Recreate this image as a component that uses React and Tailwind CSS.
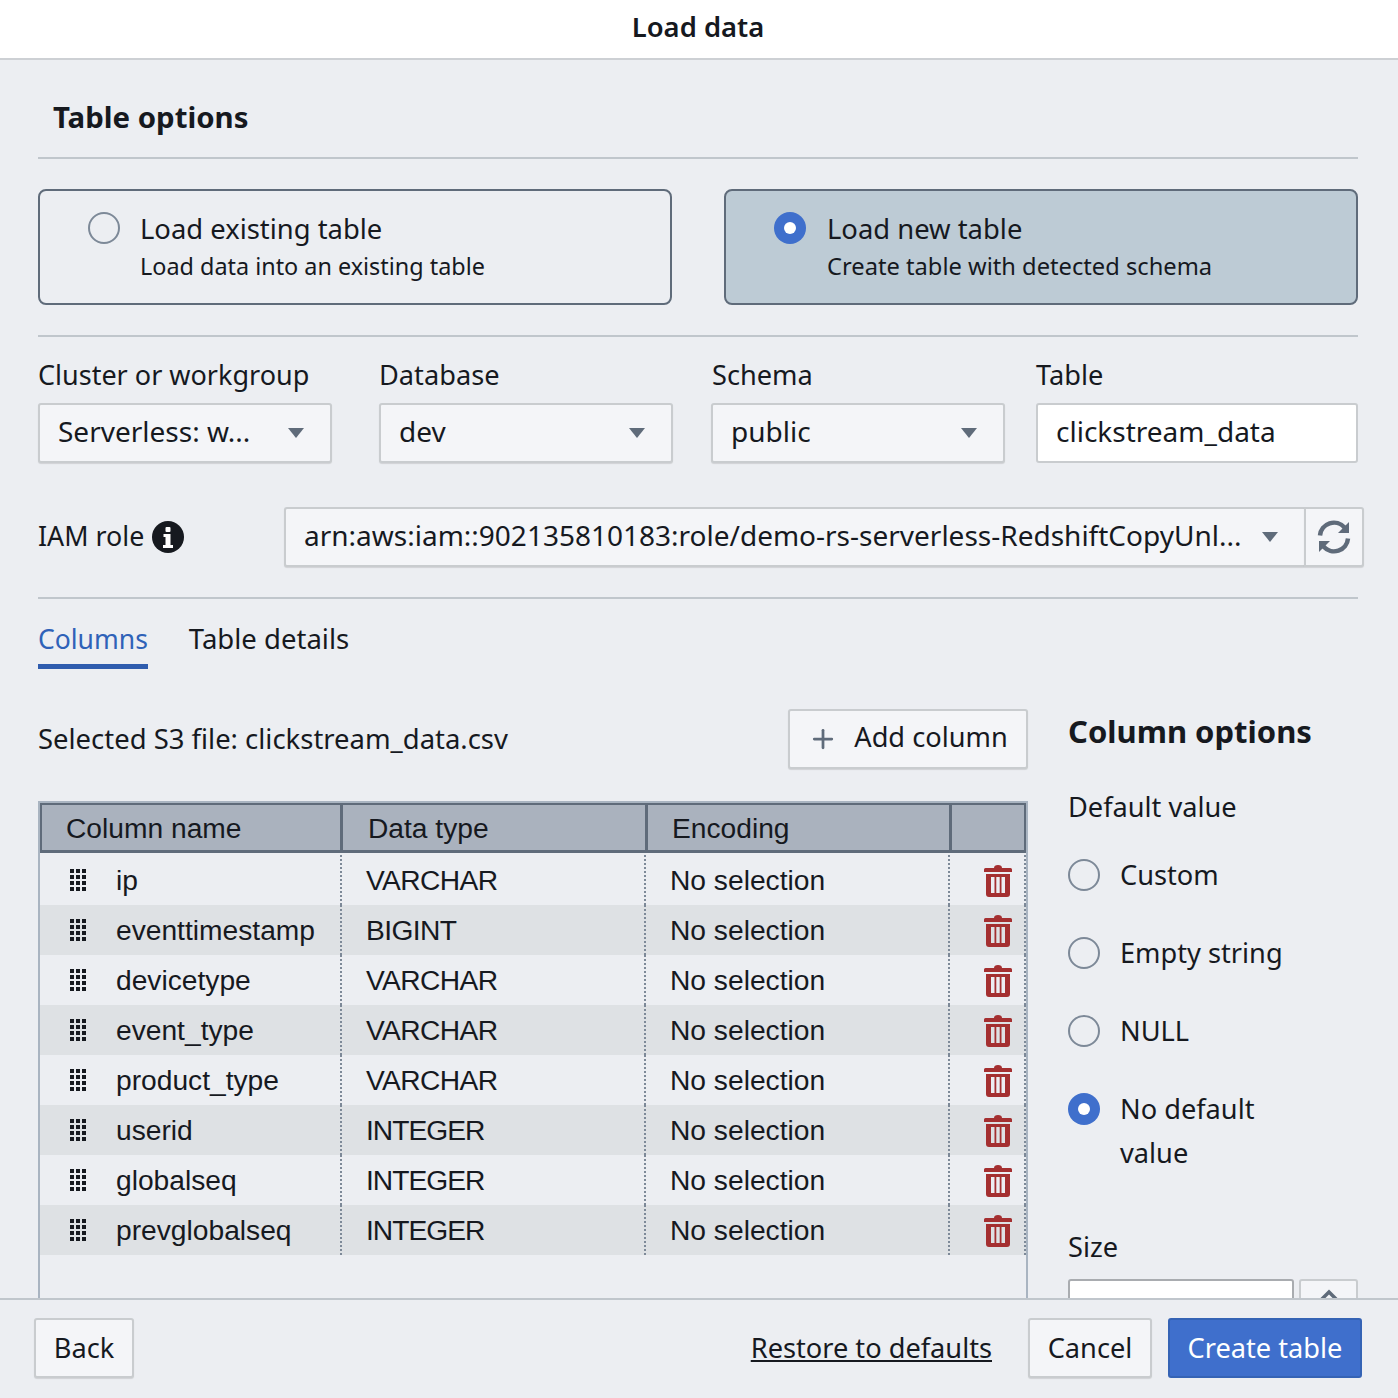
import { Plus } from 'lucide-react'

const rows = [
  ['ip', 'VARCHAR'],
  ['eventtimestamp', 'BIGINT'],
  ['devicetype', 'VARCHAR'],
  ['event_type', 'VARCHAR'],
  ['product_type', 'VARCHAR'],
  ['userid', 'INTEGER'],
  ['globalseq', 'INTEGER'],
  ['prevglobalseq', 'INTEGER'],
]

const Caret = () => (
  <svg width="16" height="10" viewBox="0 0 16 10" className="shrink-0">
    <path d="M0 0h16L8 10z" fill="#5f6b7a" />
  </svg>
)

const Grip = () => (
  <svg width="16" height="22" viewBox="0 0 16 22" className="shrink-0">
    {[0, 6, 12].flatMap((x) =>
      [0, 6, 12, 18].map((y) => <rect key={`${x}-${y}`} x={x} y={y} width="4" height="4" fill="#16191f" />)
    )}
  </svg>
)

const Trash = () => (
  <svg width="28" height="32" viewBox="0 0 28 32">
    <path d="M10 3a4 3 0 0 1 8 0h8.500a1.500 1.500 0 0 1 1.500 1.500V7H0V4.500A1.500 1.500 0 0 1 1.500 3z" fill="#a42f30" />
    <path fillRule="evenodd" d="M2 9h24v20a3 3 0 0 1-3 3H5a3 3 0 0 1-3-3zM7 12v16h3.500V12zM12.300 12v16h3.400V12zM17.500 12v16H21V12z" fill="#a42f30" />
  </svg>
)

const Radio = ({ checked }) =>
  checked ? (
    <span className="w-8 h-8 shrink-0 rounded-full bg-[#3f6fcc] flex items-center justify-center">
      <span className="w-3 h-3 rounded-full bg-white" />
    </span>
  ) : (
    <span className="w-8 h-8 shrink-0 rounded-full border-2 border-[#7d8998]" />
  )

const Select = ({ value, className = '' }) => (
  <div className={`h-[60px] bg-[#f4f5f8] border-2 border-[#c9cccf] rounded-[3px] shadow-[0_1px_1px_rgba(0,0,0,0.12)] flex items-center justify-between pl-[18px] pr-[26px] text-[28px] ${className}`}>
    <span className="truncate pb-[4px]">{value}</span>
    <Caret />
  </div>
)

const Button = ({ children, className = '' }) => (
  <button className={`h-[60px] bg-[#f4f5f8] border-2 border-[#c9cccf] rounded-[3px] shadow-[0_1px_1px_rgba(0,0,0,0.12)] flex items-center justify-center whitespace-nowrap ${className}`}>
    {children}
  </button>
)

const Divider = () => <div className="h-[2px] bg-[#c0c6cc]" />

const LoadCard = ({ title, text, checked }) => (
  <div className={`w-[634px] h-[116px] rounded-[8px] border-2 border-[#5f6b7a] flex pt-[21px] pl-[48px] ${checked ? 'bg-[#bdcbd5]' : ''}`}>
    <Radio checked={checked} />
    <div className={`-mt-[1px] ${checked ? 'ml-[21px]' : 'ml-[20px]'}`}>
      <div className="text-[27.4px] leading-[36px]">{title}</div>
      <div className={`leading-[36px] mt-[1px] ${checked ? 'text-[23.7px]' : 'text-[23.4px]'}`}>{text}</div>
    </div>
  </div>
)

const Option = ({ children, checked, className = '' }) => (
  <div className={`flex items-start gap-[20px] ${className}`}>
    <Radio checked={checked} />
    <div className="leading-[44px] -mt-[6px]">{children}</div>
  </div>
)

export default function App() {
  return (
    <div className="w-[1398px] h-[1398px] flex flex-col overflow-hidden bg-[#eceef2] text-[#16191f] font-['Noto_Sans','Open_Sans',sans-serif] text-[27.2px]">
      {/* Header */}
      <div className="h-[60px] shrink-0 bg-white border-b-2 border-[#cdd0d4] flex items-center justify-center">
        <h1 className="text-[27.4px] font-semibold pb-[4px] pr-[2px]">Load data</h1>
      </div>

      {/* Body */}
      <div className="flex-1 min-h-0 overflow-hidden pl-[38px] pr-[40px]">
        <h2 className="text-[29.4px] font-bold leading-[40px] mt-[37px] ml-[15px]">Table options</h2>
        <div className="mt-[20px]"><Divider /></div>

        <div className="flex justify-between mt-[30px] w-[1320px]">
          <LoadCard title="Load existing table" text="Load data into an existing table" />
          <LoadCard title="Load new table" text="Create table with detected schema" checked />
        </div>
        <div className="mt-[30px]"><Divider /></div>

        <div className="flex mt-[18px]">
          <div className="w-[294px]">
            <div className="text-[27px] leading-[40px] mb-[8px]">Cluster or workgroup</div>
            <Select value="Serverless: w..." />
          </div>
          <div className="w-[294px] ml-[47px]">
            <div className="leading-[40px] mb-[8px]">Database</div>
            <Select value="dev" />
          </div>
          <div className="w-[294px] ml-[38px]">
            <div className="leading-[40px] mb-[8px] pl-[1px]">Schema</div>
            <Select value="public" />
          </div>
          <div className="w-[322px] ml-[31px]">
            <div className="leading-[40px] mb-[8px]">Table</div>
            <div className="h-[60px] bg-white border-2 border-[#c9cccf] rounded-[3px] flex items-center pl-[18px] text-[28px]">
              <span className="pb-[4px]">clickstream_data</span>
            </div>
          </div>
        </div>

        <div className="flex items-center mt-[44px] w-[1326px]">
          <div className="w-[246px] flex items-center gap-[8px]">
            <span className="text-[26.8px] pb-[2px]">IAM role</span>
            <svg width="32" height="32" viewBox="0 0 32 32">
              <circle cx="16" cy="16" r="16" fill="#16191f" />
              <rect x="13.500" y="6" width="5" height="5" rx="1" fill="#fff" />
              <path d="M11.500 13h7v11h2.500v3H11v-3h2.500v-8h-2z" fill="#fff" />
            </svg>
          </div>
          <Select value="arn:aws:iam::902135810183:role/demo-rs-serverless-RedshiftCopyUnl..." className="flex-1 min-w-0 pr-[24px] rounded-r-none gap-4 border-r-0" />
          <button className="w-[60px] h-[60px] bg-[#f4f5f8] border-2 border-[#c9cccf] rounded-r-[3px] shadow-[0_1px_1px_rgba(0,0,0,0.12)] flex items-center justify-center">
            <svg width="34" height="34" viewBox="0 0 34 34" fill="none" stroke="#5f6b7a" strokeWidth="4.500">
              <path d="M3 15.500a14 14 0 0 1 24.500-8" />
              <path d="M31 18.500a14 14 0 0 1-24.500 8" />
              <path d="M32 2v11H21z" fill="#5f6b7a" stroke="none" />
              <path d="M2 32V21h11z" fill="#5f6b7a" stroke="none" />
            </svg>
          </button>
        </div>
        <div className="mt-[30px]"><Divider /></div>

        {/* Tabs */}
        <div className="flex mt-[20px] gap-[41px]">
          <div className="text-[26.5px] text-[#2f62b8] leading-[40px] h-[50px] border-b-[5px] border-[#2f5cae]">Columns</div>
          <div className="text-[27.5px] leading-[40px]">Table details</div>
        </div>

        <div className="flex mt-[40px]">
          <div className="w-[990px] shrink-0">
            <div className="flex items-center justify-between h-[60px]">
              <span className="text-[27.45px]">Selected S3 file: clickstream_data.csv</span>
              <Button className="w-[240px] gap-[16px]">
                <Plus size={30} strokeWidth={2.200} color="#5f6b7a" />
                <span className="pb-[4px]">Add column</span>
              </Button>
            </div>

            <div className="mt-[32px] h-[500px] border-2 border-[#a9b4c1] font-['Liberation_Sans',sans-serif] text-[28.2px]">
              <div className="flex h-[50px] mb-[2px] bg-[#aab2be] border-2 border-b-[3px] border-[#5f6b7a]">
                <div className="w-[301px] pl-[24px] pt-[2px] flex items-center border-r-[3px] border-[#5f6b7a]">Column name</div>
                <div className="w-[305px] pl-[25px] pt-[2px] flex items-center border-r-[3px] border-[#5f6b7a]">Data type</div>
                <div className="w-[304px] pl-[24px] pt-[2px] flex items-center border-r-[3px] border-[#5f6b7a]">Encoding</div>
                <div className="flex-1" />
              </div>
              {rows.map(([name, type], i) => (
                <div key={name} className={`flex h-[50px] ${i % 2 ? 'bg-[#dee1e4]' : ''}`}>
                  <div className="w-[302px] pl-[30px] flex items-center gap-[30px] border-r-2 border-dotted border-[#7d8998]">
                    <Grip />
                    {name}
                  </div>
                  <div className={`w-[304px] pl-[24px] flex items-center border-r-2 border-dotted border-[#7d8998] ${type === 'INTEGER' ? 'tracking-[-1px]' : 'tracking-[-0.6px]'}`}>{type}</div>
                  <div className="w-[304px] pl-[24px] flex items-center border-r-2 border-dotted border-[#7d8998]">No selection</div>
                  <div className="flex-1 flex items-center pl-[34px] pt-[2px] border-r-2 border-dotted border-[#7d8998]">
                    <Trash />
                  </div>
                </div>
              ))}
            </div>
          </div>

          {/* Column options */}
          <div className="ml-[40px] w-[290px]">
            <h3 className="text-[31px] font-bold leading-[44px]">Column options</h3>
            <div className="mt-[34px] leading-[40px]">Default value</div>
            <Option className="mt-[32px]">Custom</Option>
            <Option className="mt-[40px]">Empty string</Option>
            <Option className="mt-[40px]">NULL</Option>
            <Option className="mt-[40px]" checked>No default<br />value</Option>
            <div className="mt-[52px] leading-[40px]">Size</div>
            <div className="flex mt-[12px] gap-[5px]">
              <div className="w-[226px] h-[60px] bg-white border-2 border-[#a9acb0] rounded-[3px]" />
              <div className="w-[59px] h-[60px] bg-[#f4f5f8] border-2 border-[#c9cccf] rounded-[3px] flex justify-center pt-[8px]">
                <svg width="20" height="12" viewBox="0 0 20 12" fill="none" stroke="#5f6b7a" strokeWidth="3.500"><path d="M2 11l8-8 8 8" /></svg>
              </div>
            </div>
          </div>
        </div>
      </div>

      {/* Footer */}
      <div className="h-[100px] shrink-0 border-t-2 border-[#c0c6cc] bg-[#eceef2] flex items-center pl-[34px] pr-[36px] pb-[2px]">
        <Button className="w-[100px]">Back</Button>
        <a className="ml-auto underline">Restore to defaults</a>
        <Button className="w-[124px] ml-[36px]">Cancel</Button>
        <button className="w-[194px] h-[60px] ml-[16px] bg-[#3f6fcc] border-2 border-[#3563b5] rounded-[3px] text-white">Create table</button>
      </div>
    </div>
  )
}
